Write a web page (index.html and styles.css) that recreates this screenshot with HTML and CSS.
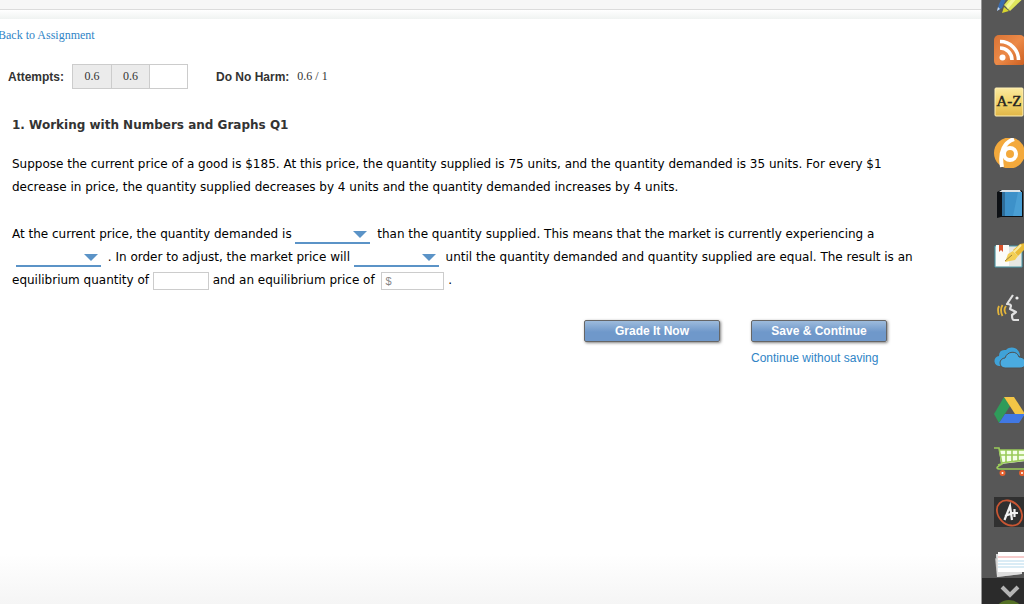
FILE: index.html
```html
<!DOCTYPE html>
<html lang="en">
<head>
  <meta charset="UTF-8">
  <meta name="viewport" content="width=device-width, initial-scale=1">
  <title>Working with Numbers and Graphs Q1</title>
  <link rel="stylesheet" href="styles.css">
</head>
<body>
  <div class="page">
    <header class="topbar"></header>
    <div class="shade"></div>
    <main class="content">
      <a class="back" href="#">Back to Assignment</a>
      <div class="scores">
        <span class="label">Attempts:</span>
        <ul class="attempts">
          <li class="used">0.6</li>
          <li class="used">0.6</li>
          <li></li>
        </ul>
        <span class="label">Do No Harm:</span>
        <span class="total">0.6 / 1</span>
      </div>
      <section class="question">
        <h1>1. Working with Numbers and Graphs Q1</h1>
        <p>Suppose the current price of a good is $185. At this price, the quantity supplied is 75 units, and the quantity demanded is 35 units. For every $1 decrease in price, the quantity supplied decreases by 4 units and the quantity demanded increases by 4 units.</p>
        <p>At the current price, the quantity demanded is
          <select class="compare" aria-label="Quantity demanded compared to supplied"><option></option><option>greater</option><option>lower</option></select>
          than the quantity supplied. This means that the market is currently experiencing a
          <select class="condition" aria-label="Market condition"><option></option><option>shortage</option><option>surplus</option></select>
          . In order to adjust, the market price will
          <select aria-label="Price change"><option></option><option>rise</option><option>fall</option></select>
          until the quantity demanded and quantity supplied are equal. The result is an equilibrium quantity of
          <input class="quantity" type="text" aria-label="Equilibrium quantity"> and an equilibrium price of
          <input class="price" type="text" placeholder="$" aria-label="Equilibrium price"> .</p>
      </section>
      <div class="actions">
        <button class="btn" type="button">Grade It Now</button>
        <div class="save">
          <button class="btn" type="button">Save &amp; Continue</button>
          <a href="#">Continue without saving</a>
        </div>
      </div>
    </main>
  </div>

  <aside class="rail">
    <nav class="tools">
      <!-- highlighter -->
      <svg viewBox="0 0 30 30">
        <path d="M3 27l2-7 10-20h4L8 24z" fill="#3a6cb0"/><path d="M3 27l1-4 2 2z" fill="#c5d5e8"/>
        <path d="M8 29l2-6 5 4z" fill="#d8d52e"/><path d="M10 21L25 3l9 7-18 17z" fill="#dfe65c"/><path d="M12 22L25 6l3 2-14 17z" fill="#f2f59a"/>
      </svg>
      <!-- rss -->
      <svg viewBox="0 0 30 30">
        <defs><linearGradient id="rss" x2="1" y2="1"><stop stop-color="#d97335"/><stop offset=".5" stop-color="#ec8a48"/><stop offset="1" stop-color="#c95c1e"/></linearGradient></defs>
        <rect width="31" height="31" rx="5" fill="url(#rss)"/>
        <circle cx="8.500" cy="22.500" r="3" fill="#fff"/>
        <path d="M6 13a12 12 0 0 1 12 12M6 6.500A18.500 18.500 0 0 1 24.500 25" fill="none" stroke="#fff" stroke-width="3.600"/>
      </svg>
      <!-- glossary -->
      <svg viewBox="0 0 30 30">
        <defs><linearGradient id="az" x2="0" y2="1"><stop stop-color="#fbe9a0"/><stop offset=".5" stop-color="#f3d56c"/><stop offset="1" stop-color="#dfb548"/></linearGradient></defs>
        <rect x="1" y="1" width="28" height="28" rx="1" fill="url(#az)" stroke="#fff0b5"/>
        <text class="az" x="15" y="19" text-anchor="middle">A-Z</text>
      </svg>
      <!-- b badge -->
      <svg viewBox="0 0 30 30">
        <circle cx="15.500" cy="15" r="15.500" fill="#f3a93c"/>
        <path d="M20 1C11 4 5 13 8 29" fill="none" stroke="#fff" stroke-width="4"/>
        <circle cx="16" cy="16" r="6" fill="none" stroke="#fff" stroke-width="4"/>
      </svg>
      <!-- book -->
      <svg viewBox="0 0 30 30">
        <path d="M3 3l4-2h20l2 2v25H7l-4 1z" fill="#0d1014"/>
        <path d="M5 3l3-2h18l1 2z" fill="#dce3e8"/>
        <path d="M8 3h20v24H8z" fill="#3d91c9"/><path d="M8 3h3v24H8z" fill="#2f6d99"/><path d="M24 3h4v24h-9z" fill="#4a9fd4"/>
      </svg>
      <!-- notebook -->
      <svg viewBox="0 0 30 30">
        <path d="M1 5h27v21H1z" fill="#e7e7e2" stroke="#4b9bab"/><path d="M2 4h13v21H2z" fill="#fbfbf8"/>
        <path d="M5 4h4v7l-2-2-2 2z" fill="#d9532c"/>
        <path d="M11 21l3-8 5-3 5 5-3 4z" fill="#f3cf55"/><path d="M19 9l7-6 5-1v6l-7 7z" fill="#e9bb36"/><path d="M20 11l7-7" stroke="#fbea9a" stroke-width="2"/><path d="M11 20l7-6" stroke="#98813a"/>
      </svg>
      <!-- text to speech -->
      <svg viewBox="0 0 30 30">
        <path d="M5 14q-2 4 0 9M8.500 13q-3 5 0 11M12 14q-3 4 0 8" fill="none" stroke="#e3b53b" stroke-width="1.800"/>
        <path d="M19 3l-6 9q4 0 4 2l-1 3 6 3-4 3q0 5 2 5h5" fill="none" stroke="#e0e0e0" stroke-width="2.200" stroke-linejoin="round"/>
        <circle cx="23" cy="6" r="1.600" fill="#eee"/>
      </svg>
      <!-- cloud -->
      <svg viewBox="0 0 30 30">
        <path d="M6 23a5 5 0 0 1-1-10q0-7 7-6c5-5 14-2 14 6z" fill="#3fa2d8"/>
        <path d="M11 25a5 5 0 0 1 0-10c2-7 12-8 14-1 8 0 9 11 1 11z" fill="#4aabe0" stroke="#505050" stroke-width="1"/>
      </svg>
      <!-- drive -->
      <svg viewBox="0 0 30 30">
        <path d="M10 2L0 19l5 9 11-17z" fill="#2f9b5a"/><path d="M10 2h10l11 17H21z" fill="#f4c646"/><path d="M11 19h20l-6 9H5z" fill="#4178e4"/>
      </svg>
      <!-- cart -->
      <svg viewBox="0 0 30 30">
        <path d="M5 4h26v11L7 18z" fill="#f5ffe8"/>
        <path d="M0 2h5l3 16q-8 4-3 5h26M7 18l-3 1M5 4h26M6 9h25M7 17l24-3M12 4v13M18 4v12M24 4v11" fill="none" stroke="#9acb5a" stroke-width="1.600"/>
        <g fill="#fff" stroke="#e6602e" stroke-width="2"><circle cx="8.500" cy="27" r="2"/><circle cx="28" cy="27" r="2"/></g>
      </svg>
      <!-- grade -->
      <svg viewBox="0 0 30 30">
        <path d="M0 0h30v31H0z" fill="#303030"/>
        <ellipse cx="15.500" cy="16" rx="11" ry="14" transform="rotate(-45 15.500 16)" fill="none" stroke="#c95633" stroke-width="1.800"/>
        <path d="M10.500 23l5.500-14 2 14M11 19l8-3M17 16h7M20.500 12v8" fill="none" stroke="#f2f2f2" stroke-width="2.200"/>
      </svg>
      <!-- note cards -->
      <svg viewBox="0 0 30 30">
        <path d="M1 9l26 16-24 3z" fill="#b9b9b9"/><path d="M2 5h26v20L3 28z" fill="#ddd"/>
        <path d="M4 3h26v20H4z" fill="#fff"/><path d="M4 8h26" stroke="#e99"/><path d="M4 12h26M4 15h26M4 18h26" stroke="#b5d9ec"/>
      </svg>
      <svg viewBox="0 0 30 30"><circle cx="15" cy="15" r="15" fill="#a8e04a"/></svg>
    </nav>
    <button class="more" type="button" aria-label="More tools">
      <svg viewBox="0 0 20 14"><path d="M2 3l8 8 8-8" fill="none" stroke="#b4b4b4" stroke-width="4"/></svg>
    </button>
  </aside>
</body>
</html>
```

FILE: styles.css
```css
* {
  box-sizing: border-box;
}
body {
  margin: 0;
  height: 100vh;
  display: flex;
  overflow: hidden;
  color: #000;
  font-family: Verdana, "DejaVu Sans", sans-serif;
  font-size: 12px;
}
a {
  color: #2f84c6;
  text-decoration: none;
}
.page {
  flex: 1;
  min-width: 0;
  background: linear-gradient(#fff, #fff calc(100% - 50px), #f5f5f5);
}
.topbar {
  height: 10px;
  background: #f7f7f7;
  border-bottom: 1px solid #dcdcdc;
}
.shade {
  height: 9px;
  background: linear-gradient(#fff, #f0f3f2);
}
.back {
  display: block;
  margin-left: -2px;
  padding-top: 9px;
  line-height: 14px;
  font-family: "Liberation Serif", serif;
}
.scores {
  display: flex;
  align-items: center;
  margin-top: 22px;
  padding-left: 8px;
  color: #333;
  font-family: "Liberation Serif", serif;
}
.label {
  font-family: "Liberation Sans", Arial, sans-serif;
  font-weight: bold;
}
.attempts {
  display: flex;
  margin: 0 28px 0 8px;
  padding: 0;
  list-style: none;
  border: 1px solid #ccc;
}
.attempts li {
  width: 38px;
  height: 23px;
  line-height: 23px;
  text-align: center;
}
.attempts li + li {
  border-left: 1px solid #ccc;
}
.attempts .used {
  background: #ebebeb;
}
.total {
  margin-left: 8px;
}
.question {
  max-width: 934px;
  padding: 28px 12px 0;
}
h1 {
  margin: 0;
  color: #333;
  font-size: 12px;
  line-height: 16px;
}
p {
  margin: 20px 0 0;
  line-height: 23px;
}
p + p {
  margin-top: 24px;
}
select {
  appearance: none;
  width: 85px;
  height: 18px;
  margin: 0 3px 0 0;
  padding: 0;
  border: 0;
  border-bottom: 2px solid #5b93c7;
  border-radius: 0;
  background: url("data:image/svg+xml,%3Csvg xmlns='http://www.w3.org/2000/svg' width='14' height='7'%3E%3Cpath d='M0 0h14L7 7z' fill='%235b93c7'/%3E%3C/svg%3E") right 3px top 5px no-repeat;
  font: inherit;
  vertical-align: middle;
}
.compare {
  width: 75px;
}
.condition {
  margin-left: 4px;
}
p input {
  height: 18px;
  padding: 0 3px;
  border: 1px solid #ccc;
  font-family: "Liberation Sans", Arial, sans-serif;
  font-size: 11px;
  vertical-align: middle;
}
.quantity {
  width: 56px;
}
.price {
  width: 63px;
  margin-left: 3px;
}
input::placeholder {
  color: #888;
}
.actions {
  display: flex;
  justify-content: flex-end;
  gap: 31px;
  max-width: 887px;
  margin-top: 28px;
  font-family: "Liberation Sans", Arial, sans-serif;
}
.btn {
  width: 136px;
  height: 22px;
  padding: 0;
  border: 1px solid #666;
  border-radius: 2px;
  background: linear-gradient(#9dbbdc, #6f98ca 55%);
  box-shadow: 1px 1px 3px rgba(0, 0, 0, .5);
  color: #fff;
  font: bold 12px "Liberation Sans", Arial, sans-serif;
}
.save a {
  display: block;
  margin-top: 8px;
  line-height: 16px;
}
.rail {
  position: relative;
  width: 43px;
  overflow: hidden;
  background: #575757;
  border-left: 1px solid #999;
}
.tools {
  display: flex;
  flex-direction: column;
  justify-content: space-between;
  height: calc(100% + 42px);
  margin-top: -16px;
  padding-left: 12px;
}
.tools svg {
  flex: none;
  width: 30px;
  height: 30px;
}
.az {
  font: 15px "Liberation Serif", serif;
  fill: #222;
  stroke: #222;
  stroke-width: .4px;
}
.more {
  position: absolute;
  left: 0;
  right: 0;
  bottom: 0;
  display: flex;
  height: 26px;
  padding: 0 0 0 14px;
  align-items: center;
  border: 0;
  background: rgba(0, 0, 0, .5);
}
.more svg {
  width: 28px;
  height: 14px;
}
```
